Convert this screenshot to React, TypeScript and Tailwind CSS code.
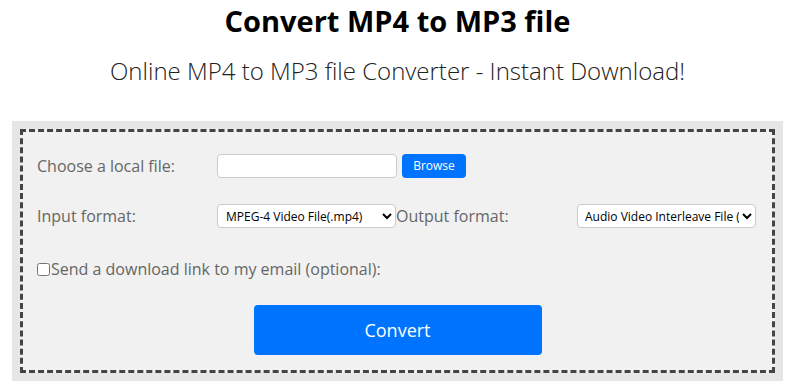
import { useState } from 'react'

const font = { fontFamily: '"Open Sans", "Noto Sans", sans-serif' }

export default function App() {
  const [sendLink, setSendLink] = useState(false)

  return (
    <div className="min-h-screen bg-white text-black" style={font}>
      {/* Heading */}
      <h1 className="text-center text-[29px] font-bold leading-[40px] pt-[1px]">Convert MP4 to MP3 file</h1>
      <p className="text-center text-[24px] font-light leading-[32px] mt-[14px] text-[#222]">
        Online MP4 to MP3 file Converter - Instant Download!
      </p>

      {/* Converter box */}
      <div className="mx-[12px] mt-[34px] bg-[#e6e6e6] p-[8px]">
        <div className="border-[3px] border-dashed border-[#444] bg-[#f1f1f1] pl-[14px] pr-[14px] pt-[22px] pb-[15px]">
          {/* File row */}
          <div className="flex items-center h-[24px]">
            <label className="w-[180px] text-[16px] text-[#666]">Choose a local file:</label>
            <input
              type="text"
              readOnly
              className="w-[180px] h-[24px] bg-white border border-[#ccc] rounded-[4px]"
            />
            <button className="ml-[5px] w-[64px] h-[24px] bg-[#0074ff] text-white text-[12px] rounded-[4px]">
              Browse
            </button>
          </div>

          {/* Format row */}
          <div className="flex items-center h-[24px] mt-[26px]">
            <label className="w-[180px] text-[16px] text-[#666]">Input format:</label>
            <select
              defaultValue="mp4"
              className="w-[179px] h-[24px] bg-white border border-[#ccc] rounded-[4px] text-[12px] pl-[4px] text-black"
            >
              <option value="mp4">MPEG-4 Video File(.mp4)</option>
            </select>
            <label className="w-[181px] text-[16px] text-[#666]">Output format:</label>
            <select
              defaultValue="avi"
              className="w-[179px] h-[24px] bg-white border border-[#ccc] rounded-[4px] text-[12px] pl-[3px] text-black"
            >
              <option value="avi">Audio Video Interleave File (.avi)</option>
            </select>
          </div>

          {/* Email checkbox */}
          <label className="flex items-center mt-[30px] text-[16px] text-[#666] leading-[22px]">
            <input
              type="checkbox"
              checked={sendLink}
              onChange={e => setSendLink(e.target.checked)}
              className="w-[13px] h-[13px] m-0 mr-[1px]"
            />
            Send a download link to my email (optional):
          </label>

          {/* Convert */}
          <div className="flex justify-center mt-[25px]">
            <button className="w-[288px] h-[50px] bg-[#0074ff] text-white text-[18px] rounded-[4px]">
              Convert
            </button>
          </div>
        </div>
      </div>
    </div>
  )
}
